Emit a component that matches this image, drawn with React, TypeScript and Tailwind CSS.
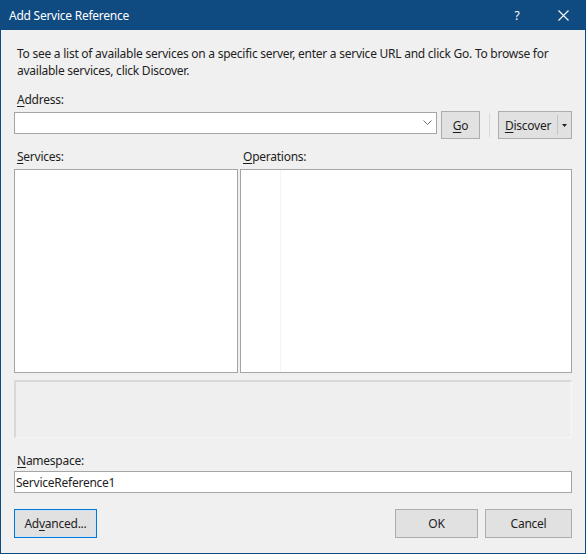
import React from "react";

const font = { fontFamily: '"Segoe UI", "Noto Sans", "Liberation Sans", sans-serif' };

function Btn({ children, className = "" }: { children: React.ReactNode; className?: string }) {
  return (
    <div
      className={`flex items-center justify-center bg-[#e1e1e1] border border-[#adadad] text-[12px] text-[#1e1e1e] ${className}`}
    >
      {children}
    </div>
  );
}

export default function App() {
  return (
    <div
      className="w-[586px] h-[554px] bg-[#f0f0f0] flex flex-col border-x border-b border-[#0f4a80] text-[12px] text-[#1e1e1e] leading-[17px] tracking-[-0.25px]"
      style={font}
    >
      <div className="h-[30px] -mx-px bg-[#0f4a80] flex items-center text-white">
        <span className="pl-[9px] text-[12px] flex-1">Add Service Reference</span>
        <span className="w-[46px] text-center text-[12px]">?</span>
        <span className="w-[46px] flex items-center justify-center">
          <svg width="11" height="11" viewBox="0 0 11 11" stroke="white" strokeWidth="1.1">
            <path d="M0.5 0.5 L10.5 10.5 M10.5 0.5 L0.5 10.5" />
          </svg>
        </span>
      </div>

      <div className="flex flex-col px-[13px]">
        <p className="pl-[3px] pt-[15px]">
          To see a list of available services on a specific server, enter a service URL and click Go. To browse for
          available services, click Discover.
        </p>

        <div className="pl-[3px] mt-[12px]">
          <span className="underline underline-offset-2">A</span>ddress:
        </div>
        <div className="flex items-start mt-[3px]">
          <div className="w-[425px] h-[22px] mt-[1px] bg-white border border-[#a5a5a5] flex items-center justify-end pr-[4px]">
            <svg width="9" height="6" viewBox="0 0 9 6" fill="none" stroke="#707070" strokeWidth="1">
              <path d="M0.5 0.5 L4.5 4.5 L8.5 0.5" />
            </svg>
          </div>
          <Btn className="w-[39px] h-[28px] ml-[4px]">
            <span>
              <span className="underline underline-offset-2">G</span>o
            </span>
          </Btn>
          <div className="w-px h-[24px] mt-[2px] bg-[#dadada] ml-[9px]" />
          <div className="flex h-[28px] ml-[8px] bg-[#e1e1e1] border border-[#adadad]">
            <div className="w-[58px] flex items-center justify-center">
              <span>
                <span className="underline underline-offset-2">D</span>iscover
              </span>
            </div>
            <div className="w-px my-[3px] bg-[#c4c4c4]" />
            <div className="w-[13px] flex items-center justify-center">
              <svg width="5" height="3" viewBox="0 0 5 3">
                <path d="M0 0 L5 0 L2.5 3 Z" fill="#1e1e1e" />
              </svg>
            </div>
          </div>
        </div>

        <div className="flex mt-[9px]">
          <div className="w-[224px] flex flex-col">
            <div className="pl-[3px]">
              <span className="underline underline-offset-2">S</span>ervices:
            </div>
            <div className="h-[204px] mt-[4px] bg-white border border-[#a5a5a5]" />
          </div>
          <div className="flex-1 flex flex-col ml-[2px]">
            <div className="pl-[3px]">
              <span className="underline underline-offset-2">O</span>perations:
            </div>
            <div className="h-[204px] mt-[4px] bg-white border border-[#a5a5a5] flex">
              <div className="w-[40px] border-r border-[#f4f4f4]" />
            </div>
          </div>
        </div>

        <div className="h-[58px] mt-[7px] border-t-2 border-l-2 border-[#d9d9d9] border-r border-b border-r-[#f7f7f7] border-b-[#f7f7f7] bg-[#efefef]" />

        <div className="pl-[3px] mt-[14px]">
          <span className="underline underline-offset-2">N</span>amespace:
        </div>
        <div className="h-[22px] mt-[2px] bg-white border border-[#a5a5a5] flex items-center pl-[1px]">
          ServiceReference1
        </div>

        <div className="flex mt-[16px]">
          <div className="w-[83px] h-[29px] border border-[#0078d7] bg-[#e1e1e1] flex items-center justify-center shadow-[inset_0_0_0_1px_#cfe3f5]">
            <span>
              Ad<span className="underline underline-offset-2">v</span>anced...
            </span>
          </div>
          <div className="flex-1" />
          <Btn className="w-[83px] h-[29px]">OK</Btn>
          <Btn className="w-[87px] h-[29px] ml-[7px]">Cancel</Btn>
        </div>
      </div>
    </div>
  );
}
